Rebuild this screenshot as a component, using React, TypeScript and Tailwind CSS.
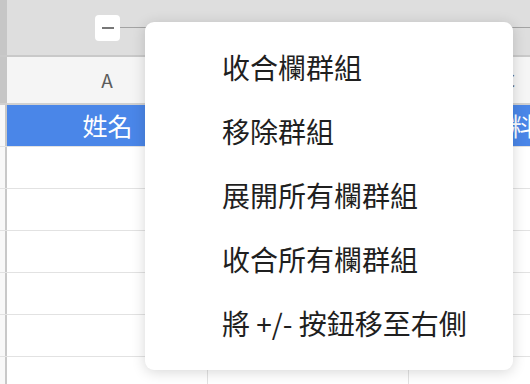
import React from 'react';

const FONT = { fontFamily: '"Noto Sans CJK TC", "Noto Sans", sans-serif' };

const MENU_ITEMS = ['收合欄群組', '移除群組', '展開所有欄群組', '收合所有欄群組', '將 +/- 按鈕移至右側'];

const COLUMNS = ['A', 'B', 'C'];

const ROWS = [
  ['姓名', '', '資料'],
  ['', '', ''],
  ['', '', ''],
  ['', '', ''],
  ['', '', ''],
  ['', '', ''],
  ['', '', ''],
];

const App: React.FC = () => {
  return (
    <div className="relative w-[530px] h-[384px] overflow-hidden bg-white" style={FONT}>
      {/* Group band */}
      <div className="flex h-[57px] bg-[#dedede] border-b-2 border-[#c9c9c9]">
        <div className="w-[7px] bg-[#c6c6c6]" />
        <div className="flex-1 flex items-center pl-[88px]">
          <div className="w-[25px] h-[26px] bg-white rounded-[4px] flex items-center justify-center">
            <div className="w-[12px] h-[2px] bg-[#777777]" />
          </div>
          <div className="flex-1 h-px bg-[#a3a3a3]" />
        </div>
      </div>

      {/* Column header */}
      <div className="flex h-[48px] bg-[#f5f5f5] border-b-2 border-[#d0d0d0]">
        <div className="w-[7px] shrink-0 bg-[#c6c6c6]" />
        {COLUMNS.map(col => (
          <div key={col} className="w-[201px] shrink-0 border-r border-[#e0e0e0] flex items-center justify-center text-[19px] text-[#5c5c5c]">
            {col}
          </div>
        ))}
      </div>

      {/* Rows */}
      {ROWS.map((row, i) => (
        <div key={i} className={`flex h-[42px] border-b border-[#e2e2e2] ${i === 0 ? 'bg-[#4a86e8]' : 'bg-white'}`}>
          <div className="w-[7px] shrink-0 bg-[#f8f8f8] border-r-2 border-[#c8c8c8]" />
          {row.map((cell, j) => (
            <div key={j} className={`w-[201px] shrink-0 flex items-center justify-center text-[25px] text-white ${i === 0 ? '' : 'border-r border-[#e2e2e2]'}`}>
              {cell}
            </div>
          ))}
        </div>
      ))}

      {/* Context menu */}
      <div className="absolute left-[145px] top-[22px] w-[368px] h-[348px] bg-white rounded-[9px] shadow-[0_2px_14px_rgba(0,0,0,0.16)] pt-[13px]">
        {MENU_ITEMS.map(item => (
          <div key={item} className="h-[64px] flex items-center pl-[77px] text-[28px] text-[#1f1f1f] whitespace-nowrap">
            {item}
          </div>
        ))}
      </div>
    </div>
  );
};

export default App;
